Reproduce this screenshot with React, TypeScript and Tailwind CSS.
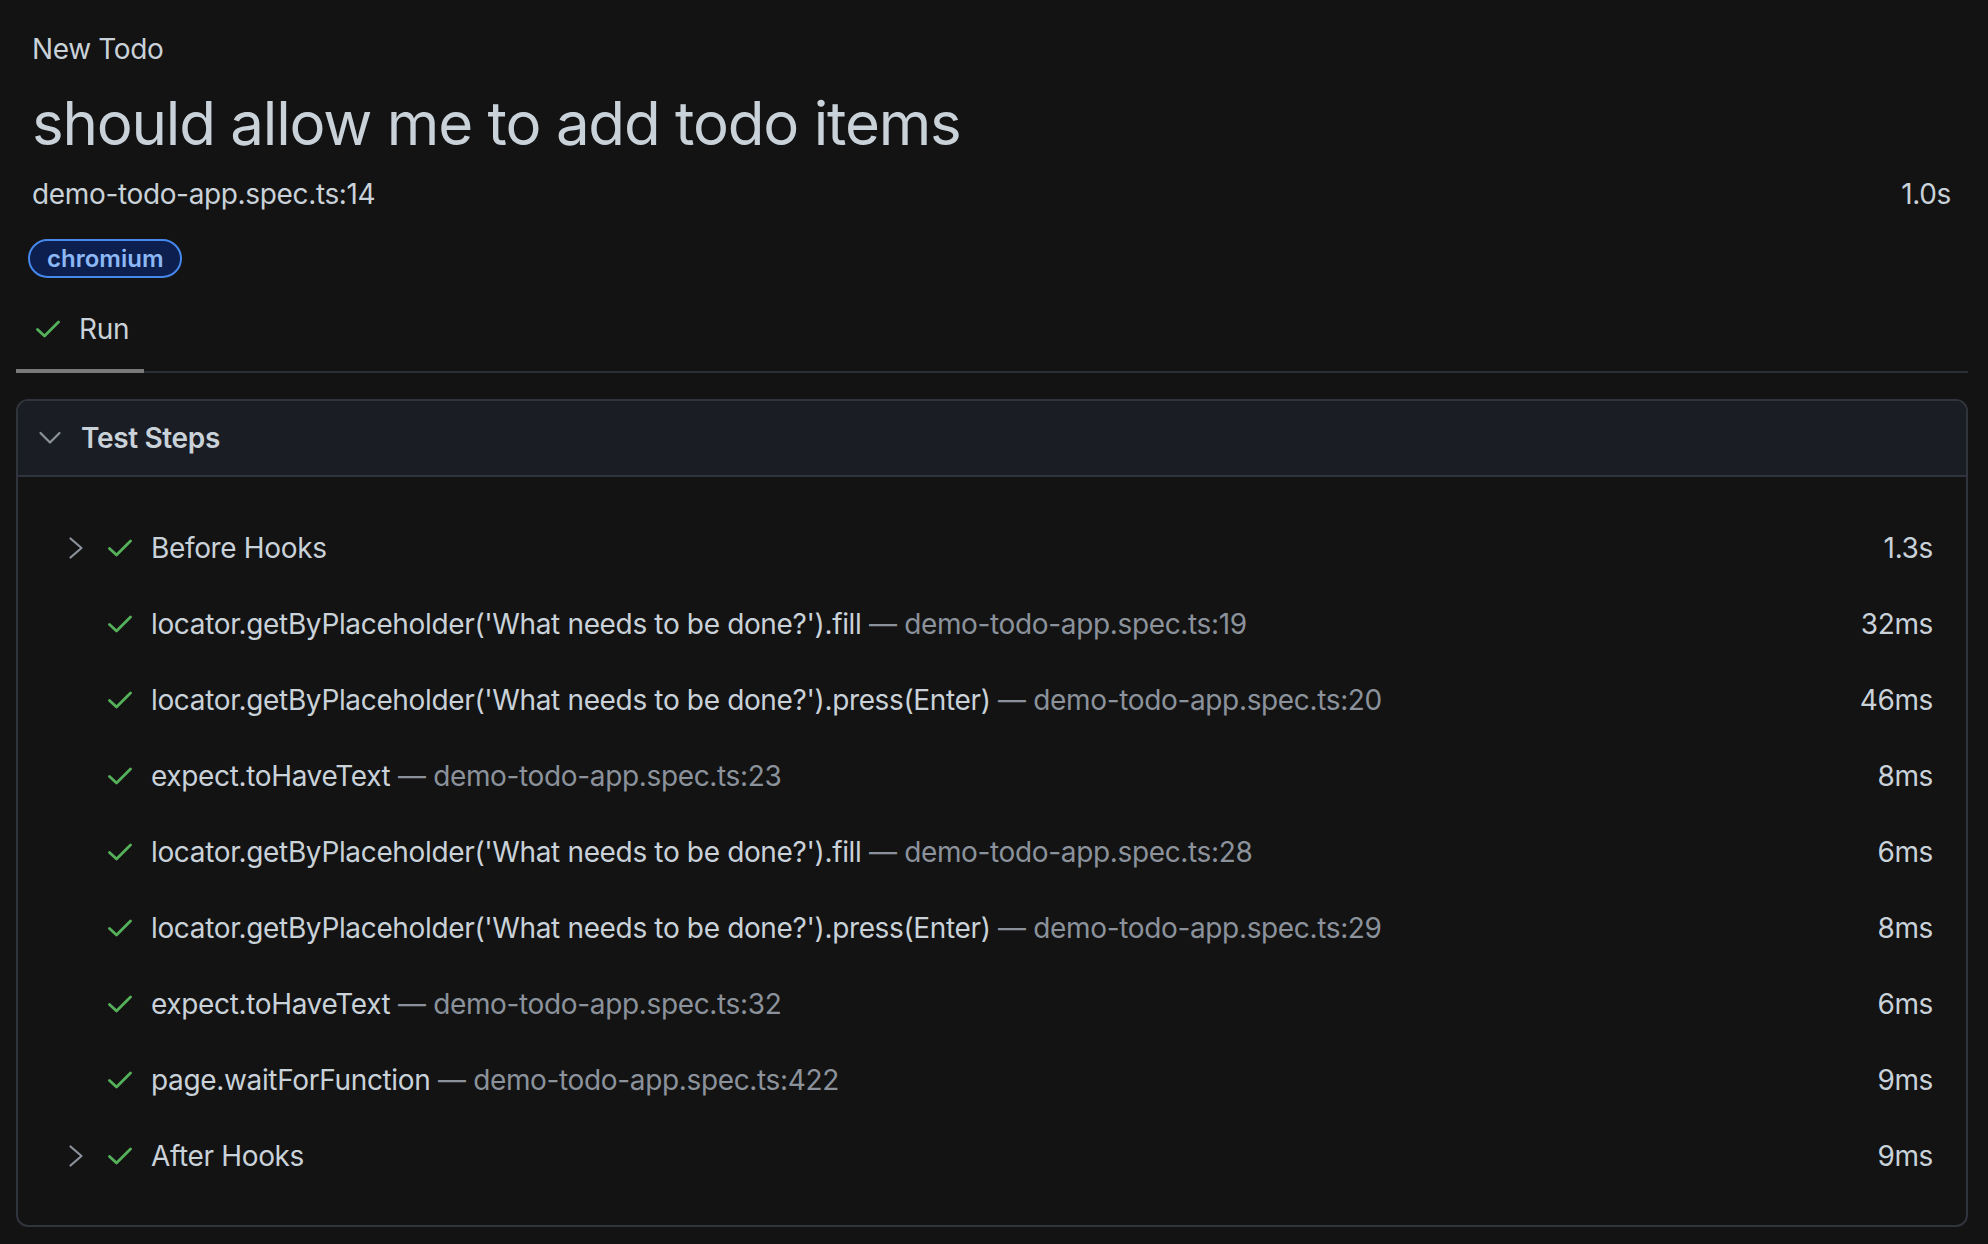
import React from 'react';

const steps = [
  { title: 'Before Hooks', duration: '1.3s', expandable: true },
  { title: "locator.getByPlaceholder('What needs to be done?').fill", location: 'demo-todo-app.spec.ts:19', duration: '32ms' },
  { title: "locator.getByPlaceholder('What needs to be done?').press(Enter)", location: 'demo-todo-app.spec.ts:20', duration: '46ms' },
  { title: 'expect.toHaveText', location: 'demo-todo-app.spec.ts:23', duration: '8ms' },
  { title: "locator.getByPlaceholder('What needs to be done?').fill", location: 'demo-todo-app.spec.ts:28', duration: '6ms' },
  { title: "locator.getByPlaceholder('What needs to be done?').press(Enter)", location: 'demo-todo-app.spec.ts:29', duration: '8ms' },
  { title: 'expect.toHaveText', location: 'demo-todo-app.spec.ts:32', duration: '6ms' },
  { title: 'page.waitForFunction', location: 'demo-todo-app.spec.ts:422', duration: '9ms' },
  { title: 'After Hooks', duration: '9ms', expandable: true },
];

function CheckIcon() {
  return (
    <svg className="w-6 h-[18px] shrink-0" viewBox="0 0 24 18" fill="none" stroke="#55b05a" strokeWidth={2.8} strokeLinecap="round" strokeLinejoin="round">
      <path d="M1.5 9.5l7 6.5L22.5 2" />
    </svg>
  );
}

function ChevronRight() {
  return (
    <svg className="w-6 h-6 shrink-0" viewBox="0 0 24 24" fill="none" stroke="#8b929b" strokeWidth={2.2} strokeLinecap="round" strokeLinejoin="round">
      <path d="M6.5 2.5l11 9.5-11 9.5" />
    </svg>
  );
}

function ChevronDown() {
  return (
    <svg className="w-6 h-6 shrink-0" viewBox="0 0 24 24" fill="none" stroke="#8b929b" strokeWidth={2.2} strokeLinecap="round" strokeLinejoin="round">
      <path d="M2.5 7l9.5 9.5L21.5 7" />
    </svg>
  );
}

export default function App() {
  return (
    <div className="min-h-screen bg-[#131313] text-[#c9d1d9] font-['Inter','Noto_Sans',sans-serif] text-[28px] tracking-[-0.35px] pb-4">
      <div className="pl-8 pr-[37px] pt-[29px]">
        <div className="leading-[40px]">New Todo</div>
        <h1 className="mt-[18px] text-[60px] leading-[72px] tracking-[-1.2px]">should allow me to add todo items</h1>
        <div className="mt-[15px] flex justify-between leading-[40px]">
          <span>demo-todo-app.spec.ts:14</span>
          <span>1.0s</span>
        </div>
      </div>
      <div className="mt-[25px] ml-[28px] flex">
        <span className="h-[39px] px-[17px] rounded-full border-2 border-[#4687ec] bg-[#0c1f4f] text-[#8cb8f6] text-[24px] font-semibold leading-[35px] tracking-normal">
          chromium
        </span>
      </div>
      <div className="mt-[13px] ml-4 mr-5 flex border-b-2 border-[#2a2e36]">
        <div className="w-[128px] -mb-[2px] pl-5 pt-[18px] pb-[20px] border-b-4 border-[#7a7a7a] flex items-center gap-[19px]">
          <CheckIcon />
          <span className="leading-[40px]">Run</span>
        </div>
      </div>
      <div className="mt-[26px] ml-4 mr-5 border-2 border-[#30353d] rounded-[12px] overflow-hidden">
        <div className="h-[76px] bg-[#1a1d24] border-b-2 border-[#30353d] flex items-center pl-[20px] gap-[19px]">
          <ChevronDown />
          <span className="font-semibold">Test Steps</span>
        </div>
        <div className="pt-[33px] pb-[31px]">
          {steps.map((s, i) => (
            <div key={i} className="h-[76px] flex items-center pl-[46px] pr-[33px]">
              {s.expandable ? <ChevronRight /> : <div className="w-6 shrink-0" />}
              <div className="ml-5">
                <CheckIcon />
              </div>
              <div className="ml-[19px] flex-1 whitespace-nowrap">
                {s.title}
                {s.location && <span className="text-[#8b929b]"> — {s.location}</span>}
              </div>
              <span>{s.duration}</span>
            </div>
          ))}
        </div>
      </div>
    </div>
  );
}
